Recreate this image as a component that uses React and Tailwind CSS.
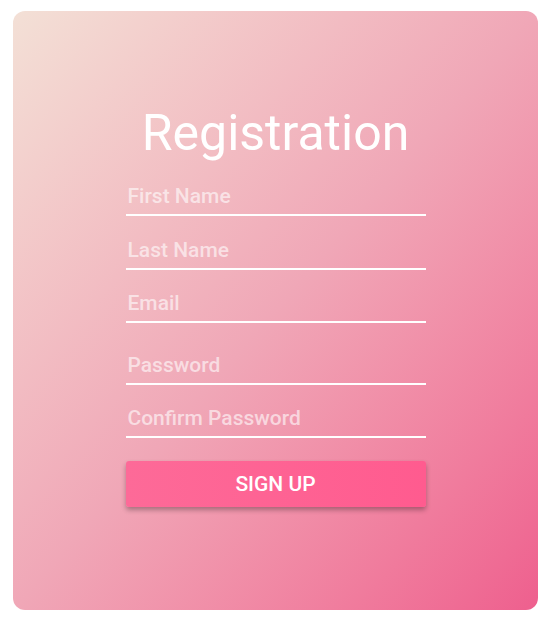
import React from "react";

const fields = [
  { ph: "First Name", mt: "mt-0", type: "text" },
  { ph: "Last Name", mt: "mt-[16px]", type: "text" },
  { ph: "Email", mt: "mt-[15px]", type: "email" },
  { ph: "Password", mt: "mt-[24px]", type: "password" },
  { ph: "Confirm Password", mt: "mt-[15px]", type: "password" },
];

export default function App() {
  return (
    <div className="w-[550px] h-[622px] bg-white pt-[11px] pl-[13px]" style={{ fontFamily: "Roboto, 'Liberation Sans', sans-serif" }}>
      <div className="w-[525px] h-[599px] rounded-[12px] bg-gradient-to-br from-[#f3e0d6] via-[#f0a7b7] to-[#ee5f8e] flex flex-col items-center pt-[97px]">
        <h1 className="text-[50px] leading-none font-normal text-white">Registration</h1>
        <form className="w-[300px] mt-[20px] flex flex-col" onSubmit={(e) => e.preventDefault()}>
          {fields.map((f) => (
            <input
              key={f.ph}
              type={f.type}
              placeholder={f.ph}
              className={`${f.mt} h-[38px] w-full bg-transparent border-0 border-b-2 border-white px-[2px] text-[21px] font-medium text-white outline-none placeholder:text-white/60`}
            />
          ))}
          <button
            type="submit"
            className="mt-[23px] h-[46px] w-full rounded-[3px] bg-gradient-to-r from-[#fd6a98] to-[#ff5b8f] pt-[2px] text-white text-[21px] font-medium shadow-[0_3px_5px_rgba(0,0,0,0.3)]"
          >
            SIGN UP
          </button>
        </form>
      </div>
    </div>
  );
}
